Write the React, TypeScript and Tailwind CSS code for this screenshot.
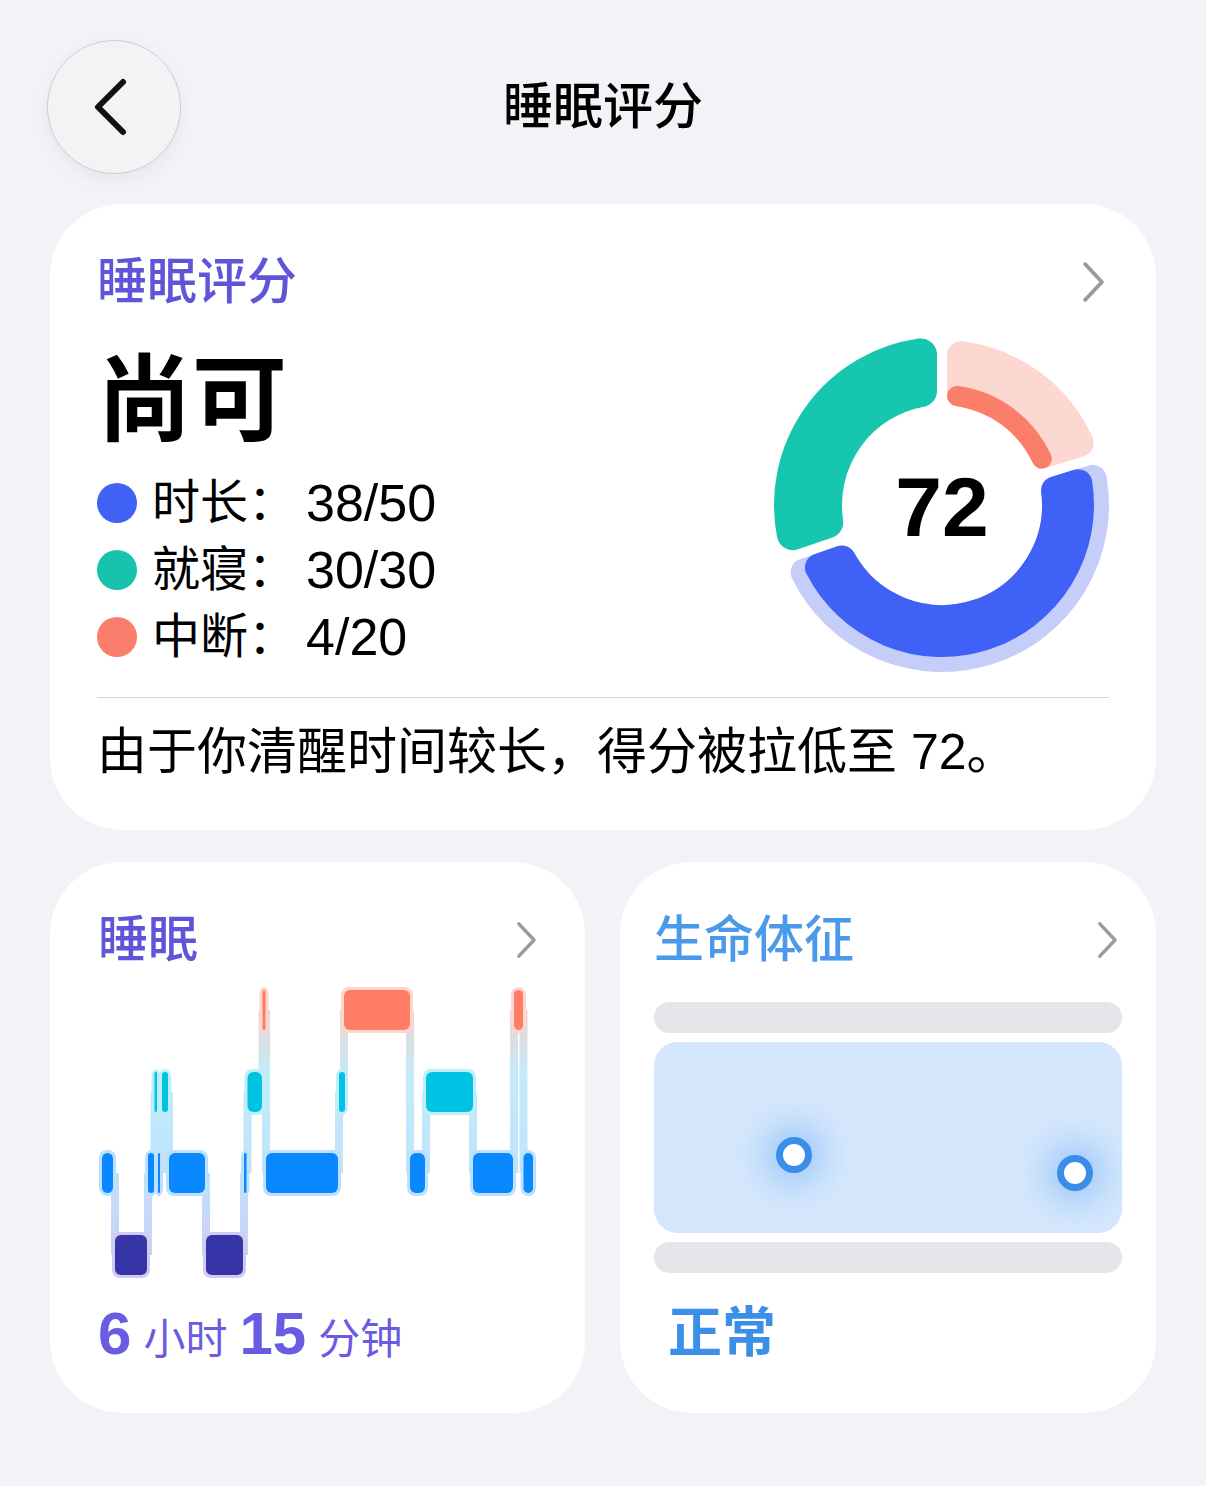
import React from 'react'

const FONT = "font-['Liberation_Sans','Noto_Sans_CJK_SC',sans-serif]"

// ---- donut geometry (degrees clockwise from 12 o'clock) ----
const CX = 170
const CY = 170

function pt(r: number, deg: number) {
  const a = ((deg - 90) * Math.PI) / 180
  return `${(CX + r * Math.cos(a)).toFixed(2)} ${(CY + r * Math.sin(a)).toFixed(2)}`
}

// annular sector shrunk by the corner radius; stroked with 2*c and round joins
function sector(r0: number, r1: number, b0: number, b1: number, gap: number, c: number) {
  const R0 = r0 + c
  const R1 = r1 - c
  const off = gap / 2 + c
  const d = (x: number) => (Math.asin(x) * 180) / Math.PI
  const o0 = b0 + d(off / R1)
  const o1 = b1 - d(off / R1)
  const i0 = b0 + d(off / R0)
  const i1 = b1 - d(off / R0)
  const lo = o1 - o0 > 180 ? 1 : 0
  const li = i1 - i0 > 180 ? 1 : 0
  return `M ${pt(R1, o0)} A ${R1} ${R1} 0 ${lo} 1 ${pt(R1, o1)} L ${pt(R0, i1)} A ${R0} ${R0} 0 ${li} 0 ${pt(R0, i0)} Z`
}

function Seg({ r0, r1, b0, b1, c, color }: { r0: number; r1: number; b0: number; b1: number; c: number; color: string }) {
  return <path d={sector(r0, r1, b0, b1, 10, c)} fill={color} stroke={color} strokeWidth={c * 2} strokeLinejoin="round" />
}

function ScoreRing() {
  const sal0 = 0 + (Math.asin(15 / 110) * 180) / Math.PI
  const sal1 = 73 - (Math.asin(15 / 110) * 180) / Math.PI
  return (
    <svg width="340" height="340" viewBox="0 0 340 340" className="-mr-[3px] mt-[24px] shrink-0">
      {/* duration: track + fill */}
      <Seg r0={100} r1={167} b0={73} b1={251} c={14} color="#c5cdf9" />
      <Seg r0={100} r1={152} b0={73} b1={251} c={14} color="#4061f6" />
      {/* bedtime */}
      <Seg r0={100} r1={168} b0={251} b1={360} c={16} color="#16c6ae" />
      {/* interruptions: track + thin fill */}
      <Seg r0={100} r1={165} b0={0} b1={73} c={14} color="#fdd8d1" />
      <path
        d={`M ${pt(110, sal0)} A 110 110 0 0 1 ${pt(110, sal1)}`}
        fill="none"
        stroke="#fb7e6a"
        strokeWidth={20}
        strokeLinecap="round"
      />
      <text
        x={CX}
        y={CY + 2}
        textAnchor="middle"
        dominantBaseline="central"
        fontFamily="'Liberation Sans', sans-serif"
        fontWeight={700}
        fontSize={84}
        fill="#000"
      >
        72
      </text>
    </svg>
  )
}

// ---- sleep stages chart ----
const LEVELS = [
  { y0: 990, y1: 1030, fill: '#ff7c67', halo: '#fdd6ce' },
  { y0: 1072, y1: 1112, fill: '#00c3e4', halo: '#bfedfa' },
  { y0: 1153, y1: 1193, fill: '#0a88ff', halo: '#bde1fd' },
  { y0: 1235, y1: 1275, fill: '#3535a8', halo: '#cfcbf3' },
]

const STAGES: [number, number, number][] = [
  [102, 113, 2],
  [115, 147, 3],
  [148, 154, 2],
  [154.5, 157, 1],
  [158, 160, 2],
  [162, 168, 1],
  [169, 205, 2],
  [206, 243, 3],
  [244, 246.5, 2],
  [247.5, 262, 1],
  [262.5, 265.5, 0],
  [266, 338, 2],
  [339, 345, 1],
  [344, 410, 0],
  [410, 425, 2],
  [426, 473, 1],
  [473, 513, 2],
  [514, 523, 0],
  [523.5, 533, 2],
]

function SleepStages() {
  const links = STAGES.slice(1).map((s, i) => {
    const p = STAGES[i]
    const a = LEVELS[p[2]]
    const b = LEVELS[s[2]]
    const top = Math.min((a.y0 + a.y1) / 2, (b.y0 + b.y1) / 2)
    const bot = Math.max((a.y0 + a.y1) / 2, (b.y0 + b.y1) / 2)
    return { x: s[0], top, bot }
  })
  return (
    <svg width="440" height="300" viewBox="98 982 440 300" className="mt-[13px] block">
      <defs>
        <linearGradient id="link" gradientUnits="userSpaceOnUse" x1="0" y1="990" x2="0" y2="1275">
          <stop offset="0" stopColor="#fccdc3" />
          <stop offset="0.3" stopColor="#c2ecfa" />
          <stop offset="0.62" stopColor="#bfe3fc" />
          <stop offset="1" stopColor="#d0caf2" />
        </linearGradient>
      </defs>
      {links.map((l, i) => (
        <rect key={`l${i}`} x={l.x - 4} y={l.top} width={8} height={l.bot - l.top} fill="url(#link)" />
      ))}
      {STAGES.map(([x0, x1, lv], i) => {
        const L = LEVELS[lv]
        return (
          <rect
            key={`h${i}`}
            x={x0 - 3}
            y={L.y0 - 3}
            width={x1 - x0 + 6}
            height={L.y1 - L.y0 + 6}
            rx={8}
            fill={L.halo}
          />
        )
      })}
      {STAGES.map(([x0, x1, lv], i) => {
        const L = LEVELS[lv]
        const w = x1 - x0
        return (
          <rect key={`b${i}`} x={x0} y={L.y0} width={w} height={L.y1 - L.y0} rx={Math.min(6, w / 2)} fill={L.fill} />
        )
      })}
    </svg>
  )
}

// ---- vitals chart ----
function Vitals() {
  return (
    <svg width="468" height="191" viewBox="0 0 468 191" className="block">
      <defs>
        <radialGradient id="glow">
          <stop offset="0" stopColor="#92c1f8" stopOpacity="0.95" />
          <stop offset="0.45" stopColor="#a9cff9" stopOpacity="0.55" />
          <stop offset="1" stopColor="#d3e6fc" stopOpacity="0" />
        </radialGradient>
      </defs>
      <circle cx={140} cy={113} r={62} fill="url(#glow)" />
      <circle cx={421} cy={131} r={62} fill="url(#glow)" />
      <circle cx={140} cy={113} r={14.5} fill="#fff" stroke="#3a8ee9" strokeWidth={7} />
      <circle cx={421} cy={131} r={14.5} fill="#fff" stroke="#3a8ee9" strokeWidth={7} />
    </svg>
  )
}

function Chevron({ h = 42 }: { h?: number }) {
  return (
    <svg width={h * 0.55} height={h} viewBox="0 0 22 40" fill="none">
      <path d="M3 3 L19 20 L3 37" stroke="#9a9aa0" strokeWidth={3.6} strokeLinecap="round" strokeLinejoin="round" />
    </svg>
  )
}

function LegendRow({ color, label, value }: { color: string; label: string; value: string }) {
  return (
    <div className="flex h-[67px] items-center">
      <span className="h-[40px] w-[40px] shrink-0 rounded-full" style={{ backgroundColor: color }} />
      <span className="ml-[15px] text-[48px] leading-none">{label}：</span>
      <span className="ml-[10px] text-[52px] leading-none">{value}</span>
    </div>
  )
}

export default function App() {
  return (
    <div className={`min-h-[1486px] w-[1206px] bg-[#f2f2f7] text-black ${FONT}`}>
      {/* nav bar */}
      <div className="grid grid-cols-[134px_1fr_134px] items-center px-[47px] pt-[40px]">
        <button className="flex h-[134px] w-[134px] items-center justify-center rounded-full border border-[#cdcdd2] bg-[#f3f3f6] shadow-[0_6px_16px_rgba(0,0,0,0.05)]">
          <svg width="40" height="60" viewBox="0 0 40 60" fill="none" className="-ml-[6px]">
            <path d="M32 5 L7 30 L32 55" stroke="#111" strokeWidth={6} strokeLinecap="round" strokeLinejoin="round" />
          </svg>
        </button>
        <h1 className="text-center text-[50px] font-medium leading-none">睡眠评分</h1>
        <div />
      </div>

      {/* score card */}
      <section className="mx-[50px] mt-[30px] rounded-[72px] bg-white px-[47px] pb-[48px] pt-[49px]">
        <div className="flex h-[58px] items-center justify-between">
          <h2 className="text-[50px] font-medium leading-none text-[#6054d8]">睡眠评分</h2>
          <div className="mr-[4px]">
            <Chevron />
          </div>
        </div>
        <div className="flex justify-between">
          <div className="flex flex-col">
            <div className="mt-[43px] text-[95px] font-bold leading-none">尚可</div>
            <div className="mt-[20px]">
              <LegendRow color="#4261f5" label="时长" value="38/50" />
              <LegendRow color="#17c3ad" label="就寝" value="30/30" />
              <LegendRow color="#fa7e6b" label="中断" value="4/20" />
            </div>
          </div>
          <ScoreRing />
        </div>
        <div className="mt-[22px] h-px bg-[#d6d6db]" />
        <p className="mt-[24px] text-[50px] leading-[60px]">由于你清醒时间较长，得分被拉低至 72。</p>
      </section>

      {/* summary tiles */}
      <div className="mx-[50px] mt-[32px] flex gap-[35px]">
        <section className="h-[551px] w-[535px] rounded-[72px] bg-white px-[48px] pt-[49px]">
          <div className="flex h-[58px] items-center justify-between">
            <h2 className="text-[50px] font-medium leading-none text-[#6054d8]">睡眠</h2>
            <Chevron h={38} />
          </div>
          <SleepStages />
          <div className="mt-[22px] flex items-baseline text-[#6a5be3]">
            <span className="text-[60px] font-bold leading-none">6</span>
            <span className="ml-[12px] text-[42px] leading-none">小时</span>
            <span className="ml-[12px] text-[60px] font-bold leading-none">15</span>
            <span className="ml-[12px] text-[42px] leading-none">分钟</span>
          </div>
        </section>

        <section className="h-[551px] w-[536px] rounded-[72px] bg-white px-[34px] pt-[49px]">
          <div className="flex h-[58px] items-center justify-between">
            <h2 className="text-[50px] font-medium leading-none text-[#4b99e9]">生命体征</h2>
            <div className="mr-[4px]">
              <Chevron h={38} />
            </div>
          </div>
          <div className="mt-[33px] h-[31px] rounded-full bg-[#e5e5ea]" />
          <div className="mt-[9px] h-[191px] overflow-hidden rounded-[24px] bg-[#d3e6fc]">
            <Vitals />
          </div>
          <div className="mt-[9px] h-[31px] rounded-full bg-[#e5e5ea]" />
          <div className="mt-[28px] pl-[14px] text-[54px] font-bold leading-[65px] text-[#3b8fe8]">正常</div>
        </section>
      </div>
    </div>
  )
}
